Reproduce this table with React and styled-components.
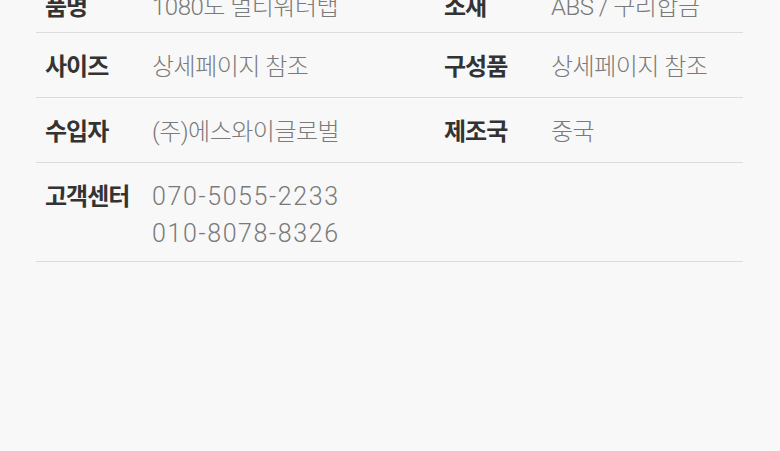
import React from "react";
import styled, { createGlobalStyle } from "styled-components";

const GlobalStyle = createGlobalStyle`
    html, body {
        margin: 0;
        padding: 0;
        background: #f8f8f8;
        overflow: hidden;
    }
    body {
        font-family: Roboto, "Noto Sans CJK KR", sans-serif;
    }
`;

const rows = [
    [
        { label: "품명", value: ["1080도 멀티워터탭"] },
        { label: "소재", value: ["ABS / 구리합금"] },
    ],
    [
        { label: "사이즈", value: ["상세페이지 참조"] },
        { label: "구성품", value: ["상세페이지 참조"] },
    ],
    [
        { label: "수입자", value: ["(주)에스와이글로벌"] },
        { label: "제조국", value: ["중국"] },
    ],
    [
        { label: "고객센터", value: ["070-5055-2233", "010-8078-8326"], phone: true },
        null,
    ],
];

const InfoTable = () => {
    return (
        <Page>
            <GlobalStyle />
            <Table>
                {rows.map((row, index) => (
                    <Row key={index}>
                        {row.map((cell, i) =>
                            cell ? (
                                <React.Fragment key={i}>
                                    <Label>{cell.label}</Label>
                                    <Value $phone={cell.phone}>
                                        {cell.value.map((line) => (
                                            <div key={line}>{line}</div>
                                        ))}
                                    </Value>
                                </React.Fragment>
                            ) : (
                                <React.Fragment key={i}>
                                    <Label />
                                    <Value />
                                </React.Fragment>
                            )
                        )}
                    </Row>
                ))}
            </Table>
        </Page>
    );
};

const Page = styled.div`
    width: 780px;
    height: 451px;
    padding: 0 37px 0 36px;
    box-sizing: border-box;
    background: #f8f8f8;
`;

const Table = styled.div`
    display: flex;
    flex-direction: column;
    margin-top: -27px;
`;

const Row = styled.div`
    display: grid;
    grid-template-columns: 116px 283px 116px 1fr;
    align-items: start;
    padding: 17px 0 12px;
    border-bottom: 1px solid #dcdcdc;

    &:first-child {
        padding: 17px 0 7px;
    }
`;

const Label = styled.div`
    padding-left: 9px;
    font-size: 24px;
    font-weight: 700;
    color: #333;
    letter-spacing: -1px;
    line-height: 35px;
`;

const Value = styled.div`
    font-size: ${(props) => (props.$phone ? "25px" : "24px")};
    font-weight: 300;
    color: #7a7a7a;
    letter-spacing: ${(props) => (props.$phone ? "1.6px" : "-0.5px")};
    line-height: ${(props) => (props.$phone ? "37px" : "35px")};
    margin: ${(props) => (props.$phone ? "-2px 0 -3px" : "0")};
`;

export default InfoTable;
